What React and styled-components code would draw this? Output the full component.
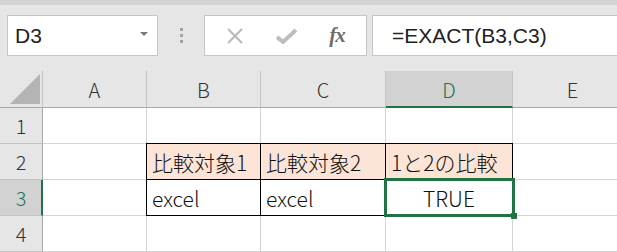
import React from 'react';
import styled, { createGlobalStyle, css } from 'styled-components';

const GlobalStyle = createGlobalStyle`
  html, body {
    margin: 0;
    padding: 0;
    background: #e6e6e6;
    overflow: hidden;
  }
`;

const Page = styled.div`
  width: 617px;
  height: 252px;
  overflow: hidden;
  background: #e6e6e6;
`;

const TopStrip = styled.div`
  height: 5px;
  background: #d4d4d4;
`;

const FormulaBar = styled.div`
  height: 66px;
  box-sizing: border-box;
  padding: 10px 0 0 7px;
  display: flex;
  align-items: flex-start;

  & > * {
    flex-shrink: 0;
  }
`;

const NameBox = styled.div`
  width: 151px;
  height: 41px;
  box-sizing: border-box;
  background: #fff;
  border: 1px solid #c6c6c6;
  display: flex;
  align-items: center;
  justify-content: space-between;
  padding: 0 9px 0 7px;
  font-family: "Liberation Sans", Arial, sans-serif;
  font-size: 21px;
  color: #222;
`;

const DropArrow = styled.span`
  width: 0;
  height: 0;
  border-left: 4px solid transparent;
  border-right: 4px solid transparent;
  border-top: 4px solid #7a7a7a;
  margin-bottom: 3px;
`;

const Grip = styled.div`
  width: 46px;
  height: 41px;
  display: flex;
  flex-direction: column;
  align-items: center;
  justify-content: center;
  gap: 3px;
`;

const GripDot = styled.span`
  width: 3px;
  height: 3px;
  background: #a3a3a3;
`;

const ButtonBox = styled.div`
  width: 163px;
  height: 41px;
  box-sizing: border-box;
  background: #fff;
  border: 1px solid #c6c6c6;
  display: flex;
  align-items: center;
  padding-left: 18px;
`;

const IconButton = styled.span`
  width: ${p => p.$w}px;
  display: flex;
  align-items: center;
  justify-content: center;
`;

const FxLabel = styled.span`
  font-family: "Liberation Serif", "Times New Roman", serif;
  font-style: italic;
  font-weight: bold;
  font-size: 21px;
  color: #6e6e6e;
  letter-spacing: -1px;
`;

const FormulaInput = styled.div`
  margin-left: 5px;
  width: 260px;
  height: 41px;
  box-sizing: border-box;
  background: #fff;
  border: 1px solid #c6c6c6;
  display: flex;
  align-items: center;
  padding-left: 19px;
  font-family: "Liberation Sans", Arial, sans-serif;
  font-size: 21px;
  color: #222;
  white-space: nowrap;
`;

const Sheet = styled.div`
  display: grid;
  grid-template-columns: 43px 104px 114px 125px 127px 120px;
  grid-template-rows: 37px repeat(4, 36px);
  background: #fff;
  font-family: "Noto Sans CJK JP", "Liberation Sans", sans-serif;
  font-weight: 300;
`;

const Corner = styled.div`
  box-sizing: border-box;
  background: #e6e6e6;
  border-right: 1px solid #c4c4c4;
  border-bottom: 1px solid #a8a8a8;
  display: flex;
  align-items: flex-end;
  justify-content: flex-end;
  padding: 0 2px 3px 0;
`;

const ColHead = styled.div`
  box-sizing: border-box;
  background: ${p => (p.$active ? '#d2d2d2' : '#e6e6e6')};
  border-right: 1px solid #c4c4c4;
  border-bottom: ${p => (p.$active ? '2px solid #217346' : '1px solid #a8a8a8')};
  color: ${p => (p.$active ? '#217346' : '#333')};
  display: flex;
  align-items: center;
  justify-content: center;
  font-size: 20px;
  padding-top: ${p => (p.$active ? '1px' : '0')};
`;

const RowHead = styled.div`
  box-sizing: border-box;
  background: ${p => (p.$active ? '#d2d2d2' : '#e6e6e6')};
  border-bottom: 1px solid #c4c4c4;
  border-right: ${p => (p.$active ? '2px solid #217346' : '1px solid #a8a8a8')};
  color: ${p => (p.$active ? '#217346' : '#333')};
  display: flex;
  align-items: center;
  justify-content: center;
  font-size: 20px;
  padding-left: ${p => (p.$active ? '1px' : '0')};
`;

const Cell = styled.div`
  position: relative;
  box-sizing: border-box;
  background: ${p => (p.$fill ? '#fce4d6' : '#fff')};
  border-right: 1px solid #d4d4d4;
  border-bottom: 1px solid #d4d4d4;
  display: flex;
  align-items: center;
  justify-content: ${p => (p.$center ? 'center' : 'flex-start')};
  padding: 0 5px;
  font-size: 21px;
  color: #111;
  white-space: nowrap;

  ${p => p.$boxed && css`
    &::after {
      content: '';
      position: absolute;
      top: -1px;
      left: -1px;
      right: -1px;
      bottom: -1px;
      border: 1px solid #000;
      pointer-events: none;
    }
  `}

  ${p => p.$selected && css`
    &::after {
      content: '';
      position: absolute;
      top: -2px;
      left: -2px;
      right: -3px;
      bottom: -2px;
      border: 3px solid #217346;
      z-index: 2;
    }
    &::before {
      content: '';
      position: absolute;
      right: -5px;
      bottom: -4px;
      width: 6px;
      height: 6px;
      background: #217346;
      z-index: 3;
    }
  `}
`;

const columns = ['A', 'B', 'C', 'D', 'E'];

const rows = [
  [null, null, null, null, null],
  [null, { text: '比較対象1', fill: true, boxed: true }, { text: '比較対象2', fill: true, boxed: true }, { text: '1と2の比較', fill: true, boxed: true }, null],
  [null, { text: 'excel', boxed: true }, { text: 'excel', boxed: true }, { text: 'TRUE', center: true, selected: true }, null],
  [null, null, null, null, null],
];

function CrossIcon() {
  return (
    <svg width="18" height="16" viewBox="0 0 18 16">
      <path d="M2 1 L16 15 M16 1 L2 15" stroke="#b9b9b9" strokeWidth="2" fill="none" />
    </svg>
  );
}

function CheckIcon() {
  return (
    <svg width="21" height="16" viewBox="0 0 21 16">
      <path d="M1 9 L7 14 L20 2" stroke="#bdbdbd" strokeWidth="4" fill="none" strokeLinejoin="miter" />
    </svg>
  );
}

function CornerTriangle() {
  return (
    <svg width="30" height="30" viewBox="0 0 30 30">
      <polygon points="30,0 30,30 0,30" fill="#b4b4b4" />
    </svg>
  );
}

export default function App() {
  return (
    <Page>
      <GlobalStyle />
      <TopStrip />
      <FormulaBar>
        <NameBox>
          <span>D3</span>
          <DropArrow />
        </NameBox>
        <Grip>
          <GripDot />
          <GripDot />
          <GripDot />
        </Grip>
        <ButtonBox>
          <IconButton $w={24}><CrossIcon /></IconButton>
          <IconButton $w={78}><CheckIcon /></IconButton>
          <IconButton $w={24}><FxLabel>fx</FxLabel></IconButton>
        </ButtonBox>
        <FormulaInput>=EXACT(B3,C3)</FormulaInput>
      </FormulaBar>
      <Sheet>
        <Corner><CornerTriangle /></Corner>
        {columns.map(c => (
          <ColHead key={c} $active={c === 'D'}>{c}</ColHead>
        ))}
        {rows.map((row, r) => (
          <React.Fragment key={r}>
            <RowHead $active={r === 2}>{r + 1}</RowHead>
            {row.map((cell, c) => (
              <Cell
                key={c}
                $fill={cell?.fill}
                $boxed={cell?.boxed}
                $center={cell?.center}
                $selected={cell?.selected}
              >
                {cell?.text}
              </Cell>
            ))}
          </React.Fragment>
        ))}
      </Sheet>
    </Page>
  );
}
